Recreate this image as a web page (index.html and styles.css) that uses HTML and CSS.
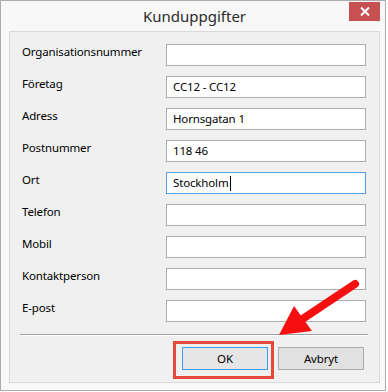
FILE: index.html
```html
<!DOCTYPE html>
<html lang="sv">
<head>
<meta charset="utf-8">
<title>Kunduppgifter</title>
<link rel="stylesheet" href="styles.css">
</head>
<body>
<div class="window">
  <div class="titlebar">
    <span class="spacer"></span>
    <span class="title">Kunduppgifter</span>
    <span class="close-wrap"><span class="close"><svg width="10" height="9" viewBox="0 0 10 9"><path d="M1 0.5 L9 8.5 M9 0.5 L1 8.5" stroke="#fff" stroke-width="2" fill="none"/></svg></span></span>
  </div>
  <div class="client">
    <div class="form">
      <div class="label">Organisationsnummer</div><div class="field"></div>
      <div class="label">Företag</div><div class="field">CC12 - CC12</div>
      <div class="label">Adress</div><div class="field">Hornsgatan 1</div>
      <div class="label">Postnummer</div><div class="field">118 46</div>
      <div class="label">Ort</div><div class="field focused">Stockholm<span class="caret"></span></div>
      <div class="label">Telefon</div><div class="field"></div>
      <div class="label">Mobil</div><div class="field"></div>
      <div class="label">Kontaktperson</div><div class="field"></div>
      <div class="label">E-post</div><div class="field"></div>
    </div>
    <div class="separator"></div>
    <div class="buttons">
      <button class="btn default">OK</button>
      <button class="btn">Avbryt</button>
    </div>
  </div>
</div>
<div class="highlight"></div>
<svg class="arrow" width="388" height="392" viewBox="0 0 388 392">
  <line x1="355" y1="284" x2="298" y2="322" stroke="#f50f0f" stroke-width="8" stroke-linecap="round"/>
  <polygon points="279,335 294,306 312,331" fill="#f50f0f"/>
</svg>
</body>
</html>
```
FILE: styles.css
```css
html, body {
  margin: 0;
  padding: 0;
  background: #ffffff;
}
body {
  width: 388px;
  height: 392px;
  position: relative;
  font-family: "Noto Sans", "Open Sans", sans-serif;
  font-size: 11.5px;
  letter-spacing: -0.15px;
  color: #000;
}
.window {
  box-sizing: border-box;
  width: 386px;
  height: 391px;
  border: 1px solid #acacac;
  background: #f8f8f8;
  padding: 0 5px 7px 8px;
  display: flex;
  flex-direction: column;
}
.titlebar {
  height: 30px;
  display: grid;
  grid-template-columns: 1fr auto 1fr;
  align-items: start;
}
.title {
  font-size: 15px;
  letter-spacing: 0;
  line-height: 20px;
  margin-top: 5px;
  color: #2b2b2b;
}
.close-wrap {
  justify-self: end;
  margin-top: 1px;
}
.close {
  width: 31px;
  height: 19px;
  background: #c75050;
  display: flex;
  align-items: center;
  justify-content: center;
}
.client {
  box-sizing: border-box;
  height: 352px;
  border: 1px solid #d9d9d9;
  background: #f0f0f0;
  padding: 12px 0 0 12px;
  display: flex;
  flex-direction: column;
}
.form {
  display: grid;
  grid-template-columns: 144px 200px;
  grid-auto-rows: 22px;
  row-gap: 10px;
}
.label {
  line-height: 16px;
  color: #000;
}
.field {
  box-sizing: border-box;
  height: 22px;
  border: 1px solid #abadb3;
  background: #fff;
  padding: 0 6px;
  line-height: 20px;
  white-space: nowrap;
  display: flex;
  align-items: center;
}
.field.focused {
  border-color: #569de5;
}
.caret {
  display: inline-block;
  width: 1px;
  height: 15px;
  background: #000;
  margin-left: 1px;
}
.separator {
  margin: 12px 11px 0 -2px;
  height: 1px;
  background: #a0a0a0;
  border-bottom: 1px solid #ffffff;
}
.buttons {
  margin-top: 11px;
  display: flex;
  justify-content: flex-end;
  gap: 10px;
  padding-right: 15px;
}
.btn {
  box-sizing: border-box;
  width: 86px;
  height: 23px;
  border: 1px solid #acacac;
  background: #e1e1e1;
  font-family: "Noto Sans", "Open Sans", sans-serif;
  font-size: 11.5px;
  letter-spacing: -0.15px;
  color: #000;
  padding: 0;
}
.btn.default {
  border-color: #3c9bf0;
  background: #e6e6e6;
}
.highlight {
  position: absolute;
  left: 173px;
  top: 341px;
  width: 95px;
  height: 32px;
  border: 3px solid #e8473c;
}
.arrow {
  position: absolute;
  left: 0;
  top: 0;
  pointer-events: none;
}
```
